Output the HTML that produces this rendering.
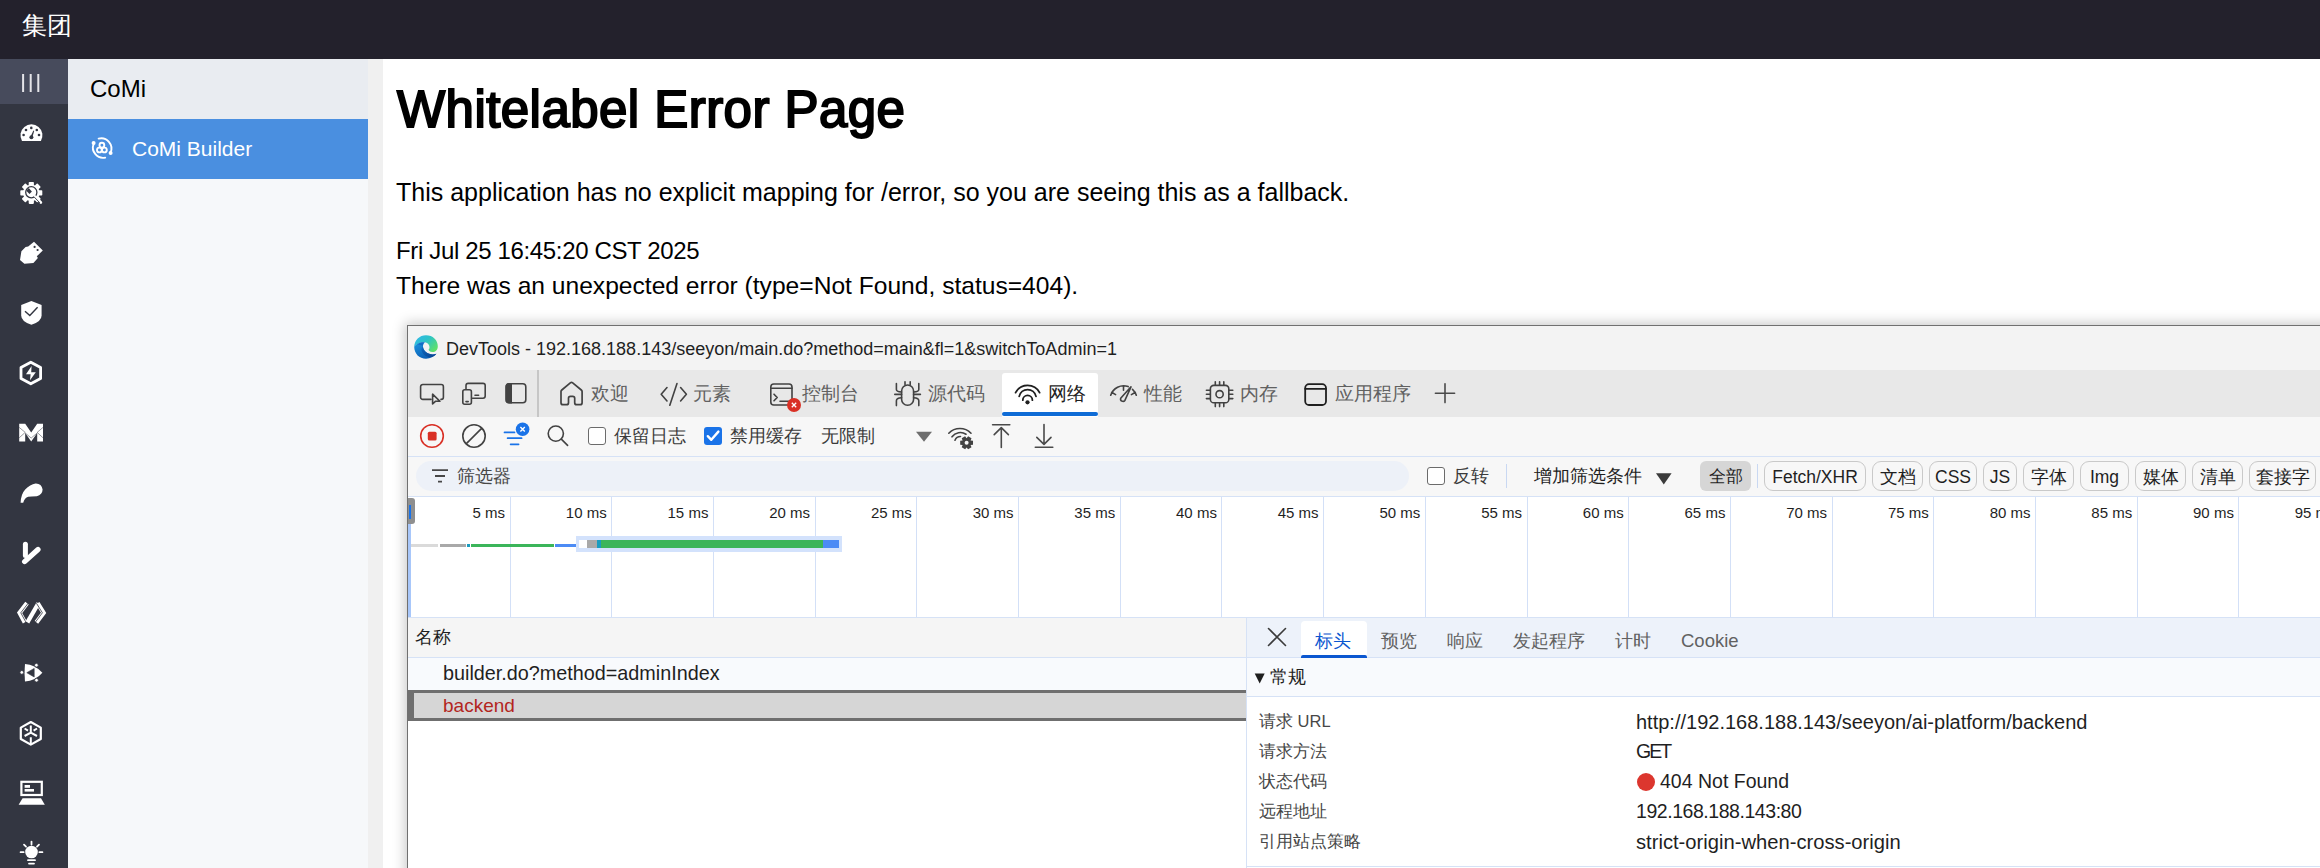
<!DOCTYPE html>
<html><head><meta charset="utf-8">
<style>
*{margin:0;padding:0;box-sizing:border-box}
html,body{width:2320px;height:868px;overflow:hidden;background:#fff;font-family:"Liberation Sans",sans-serif}
div,span,svg{position:absolute}
.nw{white-space:nowrap;line-height:1}
#top{left:0;top:0;width:2320px;height:59px;background:#23212c}
#side{left:0;top:59px;width:68px;height:809px;background:#333641}
#sub{left:68px;top:59px;width:300px;height:809px;background:#f6f8fa}
#gap{left:368px;top:59px;width:15px;height:809px;background:#f0f0f0}
.p{left:396px;font-size:25px;color:#000;white-space:nowrap;line-height:1}
/* devtools */
#dt{left:407px;top:325px;width:1960px;height:580px;border-left:1px solid #707070;border-top:1px solid #707070;background:#f3f3f3;box-shadow:-2px -2px 12px rgba(0,0,0,.22)}
.tab{font-size:18.5px;color:#616161;white-space:nowrap;line-height:1}
.tb{font-size:18px;color:#3b3b3b;white-space:nowrap;line-height:1}
.chip{top:461px;height:30px;border:1px solid #c9c9c9;border-radius:9px;background:#f7f7f7;font-size:17.5px;color:#1f1f1f;text-align:center;line-height:30px;white-space:nowrap}
.ms{top:504.5px;font-size:15px;color:#1f1f1f;white-space:nowrap;line-height:1;text-align:right;width:80px}
.gl{top:497px;width:1px;height:120px;background:#d3e0f7}
.lbl{left:1259px;font-size:16.5px;color:#474747;white-space:nowrap;line-height:1}
.val{left:1636px;font-size:19.5px;color:#1f1f1f;white-space:nowrap;line-height:1}
</style></head><body>
<div id="top"><span class="nw" style="left:22px;top:13px;color:#fff;font-size:25px">集团</span></div>
<div id="side">
 <div style="left:0;top:0;width:68px;height:45px;background:#474b5c"></div>
</div>
<div id="sub">
 <div style="left:0;top:0;width:300px;height:60px;background:#e9ecf1"><span class="nw" style="left:22px;top:18px;font-size:24px;color:#000">CoMi</span></div>
 <div style="left:0;top:60px;width:300px;height:60px;background:#4a8fe0"><span class="nw" style="left:64px;top:19px;font-size:21px;color:#fff">CoMi Builder</span></div>
</div>
<div id="gap"></div>

<span class="nw" style="left:397px;top:84px;font-size:51px;color:#000;letter-spacing:0.45px;-webkit-text-stroke:2px #000">Whitelabel Error Page</span>
<span class="p" style="top:180px">This application has no explicit mapping for /error, so you are seeing this as a fallback.</span>
<span class="p" style="top:239px;font-size:24px;letter-spacing:-0.35px">Fri Jul 25 16:45:20 CST 2025</span>
<span class="p" style="top:274px;font-size:24.6px">There was an unexpected error (type=Not Found, status=404).</span>

<div id="dt"></div>
<!-- title bar -->
<span class="nw" style="left:446px;top:340px;font-size:18px;color:#1f1f1f">DevTools - 192.168.188.143/seeyon/main.do?method=main&amp;fl=1&amp;switchToAdmin=1</span>
<!-- tab bar -->
<div style="left:408px;top:370px;width:1912px;height:47px;background:#e8e8e8"></div>
<div style="left:537px;top:370px;width:2px;height:47px;background:#c6c6c6"></div>
<div style="left:1002px;top:373px;width:96px;height:44px;background:#fff;border-radius:3px 3px 0 0"></div>
<div style="left:1002px;top:412px;width:96px;height:4px;background:#0f6cd6;border-radius:2px"></div>
<span class="tab" style="left:591px;top:385px">欢迎</span>
<span class="tab" style="left:693px;top:385px">元素</span>
<span class="tab" style="left:802px;top:385px">控制台</span>
<span class="tab" style="left:928px;top:385px">源代码</span>
<span class="tab" style="left:1048px;top:385px;color:#1f1f1f">网络</span>
<span class="tab" style="left:1144px;top:385px">性能</span>
<span class="tab" style="left:1240px;top:385px">内存</span>
<span class="tab" style="left:1335px;top:385px">应用程序</span>
<!-- toolbar -->
<div style="left:408px;top:417px;width:1912px;height:39px;background:#f7f7f7"></div>
<div style="left:408px;top:456px;width:1912px;height:1px;background:#d6e2f6"></div>
<div style="left:588px;top:427px;width:18px;height:18px;border:1.5px solid #6b6b6b;border-radius:3px;background:#fff"></div>
<span class="tb" style="left:614px;top:427px">保留日志</span>
<div style="left:704px;top:427px;width:18px;height:18px;border-radius:3px;background:#1a73e8"></div>
<span class="tb" style="left:730px;top:427px">禁用缓存</span>
<span class="tb" style="left:821px;top:427px">无限制</span>
<!-- filter row -->
<div style="left:408px;top:457px;width:1912px;height:39px;background:#f7f7f7"></div>
<div style="left:408px;top:496px;width:1912px;height:1px;background:#d6e2f6"></div>
<div style="left:416px;top:461px;width:993px;height:30px;border-radius:15px;background:#edf1f8"></div>
<span class="tb" style="left:457px;top:467px;color:#474747">筛选器</span>
<div style="left:1427px;top:467px;width:18px;height:18px;border:1.5px solid #6b6b6b;border-radius:3px;background:#fff"></div>
<span class="tb" style="left:1453px;top:467px">反转</span>
<div style="left:1506px;top:464px;width:1px;height:24px;background:#c9d8f2"></div>
<span class="tb" style="left:1534px;top:467px;color:#1f1f1f">增加筛选条件</span>
<div style="left:1700px;top:461px;width:51px;height:30px;border-radius:6px;background:#d6d6d6;font-size:17px;color:#1f1f1f;text-align:center;line-height:31px">全部</div>
<div style="left:1757px;top:464px;width:1px;height:24px;background:#c9d8f2"></div>
<div class="chip" style="left:1764px;width:102px">Fetch/XHR</div>
<div class="chip" style="left:1872px;width:51px">文档</div>
<div class="chip" style="left:1929px;width:48px">CSS</div>
<div class="chip" style="left:1983px;width:34px">JS</div>
<div class="chip" style="left:2023px;width:51px">字体</div>
<div class="chip" style="left:2080px;width:49px">Img</div>
<div class="chip" style="left:2135px;width:51px">媒体</div>
<div class="chip" style="left:2192px;width:51px">清单</div>
<div class="chip" style="left:2249px;width:67px">套接字</div>
<!-- timeline -->
<div style="left:408px;top:497px;width:1912px;height:120px;background:#fff"></div>
<div style="left:408px;top:617px;width:1912px;height:1px;background:#d6e2f6"></div>
<div class="gl" style="left:509.5px"></div>
<span class="ms" style="left:425.0px">5 ms</span>
<div class="gl" style="left:611.2px"></div>
<span class="ms" style="left:526.7px">10 ms</span>
<div class="gl" style="left:712.9px"></div>
<span class="ms" style="left:628.4px">15 ms</span>
<div class="gl" style="left:814.6px"></div>
<span class="ms" style="left:730.1px">20 ms</span>
<div class="gl" style="left:916.3px"></div>
<span class="ms" style="left:831.8px">25 ms</span>
<div class="gl" style="left:1018.0px"></div>
<span class="ms" style="left:933.5px">30 ms</span>
<div class="gl" style="left:1119.7px"></div>
<span class="ms" style="left:1035.2px">35 ms</span>
<div class="gl" style="left:1221.4px"></div>
<span class="ms" style="left:1136.9px">40 ms</span>
<div class="gl" style="left:1323.1px"></div>
<span class="ms" style="left:1238.6px">45 ms</span>
<div class="gl" style="left:1424.8px"></div>
<span class="ms" style="left:1340.3px">50 ms</span>
<div class="gl" style="left:1526.5px"></div>
<span class="ms" style="left:1442.0px">55 ms</span>
<div class="gl" style="left:1628.2px"></div>
<span class="ms" style="left:1543.7px">60 ms</span>
<div class="gl" style="left:1729.9px"></div>
<span class="ms" style="left:1645.4px">65 ms</span>
<div class="gl" style="left:1831.6px"></div>
<span class="ms" style="left:1747.1px">70 ms</span>
<div class="gl" style="left:1933.3px"></div>
<span class="ms" style="left:1848.8px">75 ms</span>
<div class="gl" style="left:2035.0px"></div>
<span class="ms" style="left:1950.5px">80 ms</span>
<div class="gl" style="left:2136.7px"></div>
<span class="ms" style="left:2052.2px">85 ms</span>
<div class="gl" style="left:2238.4px"></div>
<span class="ms" style="left:2153.9px">90 ms</span>
<span class="ms" style="left:2255.6px">95 ms</span>
<div style="left:408px;top:524px;width:3px;height:93px;background:#a8c7fa"></div>
<div style="left:408px;top:498px;width:7px;height:26px;background:#8f8f8f;border-radius:0 3px 3px 0"></div>
<div style="left:409px;top:505px;width:2px;height:14px;background:#1a73e8"></div>
<div style="left:411px;top:544px;width:27px;height:3px;background:#dadada"></div>
<div style="left:440px;top:544px;width:26px;height:3px;background:#a9a9a9"></div>
<div style="left:467px;top:544px;width:3px;height:3px;background:#1a9cc0"></div>
<div style="left:471px;top:544px;width:83px;height:3px;background:#3bb55a"></div>
<div style="left:555px;top:544px;width:21px;height:3px;background:#4c8bf5"></div>
<div style="left:576px;top:536px;width:266px;height:16px;background:#d3e2fc"></div>
<div style="left:579px;top:540px;width:8px;height:8px;background:#fff"></div>
<div style="left:587px;top:540px;width:10px;height:8px;background:#a9a9a9"></div>
<div style="left:597px;top:540px;width:4px;height:8px;background:#1a9cc0"></div>
<div style="left:601px;top:540px;width:222px;height:8px;background:#3bb55a"></div>
<div style="left:823px;top:540px;width:16px;height:8px;background:#4c8bf5"></div>

<!-- bottom -->
<div style="left:408px;top:618px;width:838px;height:39px;background:#f5f5f5"></div>
<div style="left:408px;top:657px;width:838px;height:1px;background:#d6e2f6"></div>
<span class="tb" style="left:415px;top:628px;color:#1f1f1f">名称</span>
<div style="left:408px;top:658px;width:838px;height:32px;background:#f8fafd"></div>
<span class="nw" style="left:443px;top:664px;font-size:19.8px;color:#1f1f1f">builder.do?method=adminIndex</span>
<div style="left:408px;top:690px;width:838px;height:31px;background:#d6d6d6;border:3px solid #6f6f6f;border-left-width:6px;border-right:0"></div>
<span class="nw" style="left:443px;top:696px;font-size:19px;color:#b3261e">backend</span>
<div style="left:408px;top:721px;width:838px;height:147px;background:#fff"></div>
<!-- details -->
<div style="left:1246px;top:618px;width:1074px;height:250px;background:#fff;border-left:1px solid #d6e2f6"></div>
<div style="left:1247px;top:618px;width:1073px;height:40px;background:#edf2fa;border-bottom:1px solid #d6e2f6"></div>
<div style="left:1301px;top:621px;width:66px;height:37px;background:#fff;border-radius:4px 4px 0 0"></div>
<div style="left:1301px;top:655px;width:66px;height:3px;background:#0b57d0;border-radius:2px 2px 0 0"></div>
<span class="tab" style="left:1315px;top:632px;color:#0b57d0;font-size:18px">标头</span>
<span class="tab" style="left:1381px;top:632px;font-size:18px">预览</span>
<span class="tab" style="left:1447px;top:632px;font-size:18px">响应</span>
<span class="tab" style="left:1513px;top:632px;font-size:18px">发起程序</span>
<span class="tab" style="left:1615px;top:632px;font-size:18px">计时</span>
<span class="tab" style="left:1681px;top:632px">Cookie</span>
<div style="left:1247px;top:658px;width:1073px;height:39px;background:#f8fafd;border-bottom:1px solid #d6e2f6"></div>
<span class="tb" style="left:1270px;top:668px;color:#1f1f1f">常规</span>
<span class="lbl" style="top:713px">请求 URL</span>
<span class="lbl" style="top:743px">请求方法</span>
<span class="lbl" style="top:773px">状态代码</span>
<span class="lbl" style="top:803px">远程地址</span>
<span class="lbl" style="top:833px">引用站点策略</span>
<span class="val" style="top:712px;font-size:20px">http://192.168.188.143/seeyon/ai-platform/backend</span>
<span class="val" style="top:742px;letter-spacing:-2px">GET</span>
<div style="left:1637px;top:773px;width:18px;height:18px;border-radius:50%;background:#dc362e"></div>
<span class="val" style="left:1660px;top:772px">404 Not Found</span>
<span class="val" style="top:802px;letter-spacing:-0.45px">192.168.188.143:80</span>
<span class="val" style="top:832px;font-size:20.2px">strict-origin-when-cross-origin</span>
<div style="left:1247px;top:866px;width:1073px;height:1px;background:#d6e2f6"></div>
<svg style="left:0;top:0" width="2320" height="868" viewBox="0 0 2320 868">
<g fill="none" stroke="#424242" stroke-width="1.6" stroke-linecap="round" stroke-linejoin="round">
<!-- inspect -->
<path d="M431 399.4H422.8a2.2 2.2 0 0 1-2.2-2.2V386.7a2.2 2.2 0 0 1 2.2-2.2H441.2a2.2 2.2 0 0 1 2.2 2.2V397.2a2.2 2.2 0 0 1-2.2 2.2H441"/>
<path d="M432.6 394.2V404L435.4 401.3H440Z"/>
<!-- device -->
<path d="M466 389V385.6a2.2 2.2 0 0 1 2.2-2.2H483a2.2 2.2 0 0 1 2.2 2.2V396a2.2 2.2 0 0 1-2.2 2.2H472.5"/>
<rect x="462.8" y="389.8" width="8.6" height="14.4" rx="2"/>
<path d="M466 401.6H468.2M475 395.3H478.6"/>
<!-- dock -->
<rect x="506.2" y="383.8" width="19.6" height="19" rx="3"/>
<!-- home -->
<path d="M561 391.6Q561 390.7 561.8 390L570.3 382.9Q571.5 382 572.7 382.9L581.3 390Q582.1 390.7 582.1 391.6V402.7Q582.1 404.7 580.1 404.7H576.7Q574.7 404.7 574.7 402.7V398.3Q574.7 396.3 572.7 396.3H570.5Q568.5 396.3 568.5 398.3V402.7Q568.5 404.7 566.5 404.7H563Q561 404.7 561 402.7Z" stroke-width="1.7"/>
<!-- elements -->
<path d="M667 387.5L661.2 394.3L667 401M677 383.5L669.8 405.3M680.6 387.5L686.4 394.3L680.6 401"/>
<!-- console -->
<rect x="770.8" y="384" width="21.2" height="21" rx="3"/>
<path d="M770.8 388.3H792M774 394.2L777.2 397.5L774 400.8M780 401.3H789"/>
<!-- bug -->
<rect x="901.6" y="385" width="12" height="20.2" rx="6"/>
<path d="M905 381.8V384.5M910.2 381.8V384.5M896.4 383.5V389.5Q896.4 391.8 901.6 392M918.8 383.5V389.5Q918.8 391.8 913.6 392M894.8 394.4H901.6M913.6 394.4H920.4M901.6 397.8Q896.4 398 896.4 400.8V405.6M913.6 397.8Q918.8 398 918.8 400.8V405.6"/>
<!-- perf -->
<path d="M1110.7 395.3A13.4 13.4 0 0 1 1128.2 386.6M1132.5 389.3A13.4 13.4 0 0 1 1136.3 395.3M1111.6 392.3L1115.6 394.6M1123.5 386V390.2M1135.4 392.3L1131.4 394.6"/>
<path d="M1131 386.8L1124.9 400.4A2.4 2.4 0 0 1 1120.7 398.2Z"/>
<!-- memory -->
<rect x="1210.4" y="385.4" width="18.4" height="17.4" rx="3.4"/>
<circle cx="1219.6" cy="394.2" r="3.6"/>
<path d="M1215.3 381.8V385M1219.6 381.8V385M1223.8 381.8V385M1215.3 403V406.6M1219.6 403V406.6M1223.8 403V406.6M1206.4 390.2H1210M1206.4 394.3H1210M1206.4 398.6H1210M1229.2 390.2H1232.8M1229.2 394.3H1232.8M1229.2 398.6H1232.8"/>
<!-- app -->
<rect x="1305.2" y="384.2" width="20.8" height="20.8" rx="3.8" stroke="#1f1f1f" stroke-width="1.8"/>
<path d="M1305.2 388.8H1326" stroke="#1f1f1f" stroke-width="1.8"/>
<!-- plus -->
<path d="M1445 383.8V402.6M1435.4 393.2H1454.6" stroke="#4a4a4a"/>
<!-- clear -->
<circle cx="474" cy="436" r="11.2"/>
<path d="M466.6 443.4L481.4 428.6"/>
<!-- search -->
<circle cx="555.8" cy="433.6" r="7.6"/>
<path d="M561.3 439.1L567.6 445.4"/>
<!-- wifi gear -->
<path d="M948.8 433.2A15.5 15.5 0 0 1 971 433.2M952 436.8A10.5 10.5 0 0 1 966 434.2M955 440.2A6 6 0 0 1 960.5 436.5"/>
<!-- upload/download -->
<path d="M992.6 424.8H1009.8M1001.3 428V447.4M994.2 434.6L1001.3 427.6L1008.4 434.6" stroke="#4a4a4a"/>
<path d="M1044 424.6V444.2M1036.8 437.4L1044 444.4L1051 437.4M1035.3 447.2H1052.8" stroke="#4a4a4a"/>
<!-- filter in input -->
<path d="M432 470.2H448M435 476H445M438 481.6H442" stroke="#474747" stroke-width="1.8" stroke-linecap="butt"/>
<!-- close X details -->
<path d="M1268.5 628.5L1285.5 645.5M1285.5 628.5L1268.5 645.5" stroke="#3b3b3b" stroke-width="1.6"/>
</g>
<!-- dock filled part -->
<path d="M509.2 383H512V403.6H509.2A3.8 3.8 0 0 1 505.4 399.8V386.8A3.8 3.8 0 0 1 509.2 383Z" fill="#424242"/>
<!-- console badge -->
<circle cx="794" cy="405" r="7" fill="#d93025"/>
<path d="M791.8 402.8L796.2 407.2M796.2 402.8L791.8 407.2" stroke="#fff" stroke-width="1.3"/>
<!-- wifi selected -->
<g fill="none" stroke="#1f1f1f" stroke-width="1.8" stroke-linecap="round">
<path d="M1015.6 392.6A13.6 13.6 0 0 1 1039.6 392.6M1019.2 396.4A8.6 8.6 0 0 1 1036 396.4M1022.8 400.2A4.6 4.6 0 0 1 1032.4 400.2"/>
</g>
<circle cx="1027.5" cy="402.3" r="2.1" fill="#1f1f1f"/>
<!-- record -->
<circle cx="432" cy="436" r="11.3" fill="none" stroke="#d93025" stroke-width="1.6"/>
<rect x="427.8" y="431.8" width="8.8" height="8.8" rx="1.5" fill="#d93025"/>
<!-- filter toolbar blue -->
<path d="M504.5 432.4H514.5M507.6 438.2H521.6M510.6 444.3H518.6" stroke="#1a73e8" stroke-width="1.7" stroke-linecap="round"/>
<circle cx="522.6" cy="429.2" r="6.8" fill="#1a73e8"/>
<path d="M520.4 427L524.8 431.4M524.8 427L520.4 431.4" stroke="#fff" stroke-width="1.4"/>
<!-- checkmark -->
<path d="M707.8 436.2L711.3 439.8L718.4 431.6" fill="none" stroke="#fff" stroke-width="2.4" stroke-linecap="round" stroke-linejoin="round"/>
<!-- dropdown triangles -->
<path d="M916 431.8H932L924 441.8Z" fill="#6e6e6e"/>
<path d="M1656 473.2H1671.6L1663.8 484.4Z" fill="#3b3b3b"/>
<path d="M1254.7 673.6H1264.7L1259.7 683.4Z" fill="#1f1f1f"/>
<!-- gear -->
<g transform="translate(966.6 442.8)">
<path d="M3.98 -2.30L6.41 -1.96L6.41 1.96L3.98 2.30L4.90 4.57L1.51 6.53L0.00 4.60L-1.51 6.53L-4.90 4.57L-3.98 2.30L-6.41 1.96L-6.41 -1.96L-3.98 -2.30L-4.90 -4.57L-1.51 -6.53L-0.00 -4.60L1.51 -6.53L4.90 -4.57Z" fill="#424242"/>
<circle r="2" fill="#f7f7f7"/>
</g>
</svg>
<svg style="left:0;top:0" width="400" height="868" viewBox="0 0 400 868">
<g fill="#fff">
<!-- ||| -->
<rect x="22.1" y="74" width="2" height="18" fill="#e4e4e8"/>
<rect x="29.7" y="74" width="2" height="18" fill="#e4e4e8"/>
<rect x="37.3" y="74" width="2" height="18" fill="#e4e4e8"/>
<!-- gauge -->
<path d="M22 141A11 11 0 1 1 40.9 141Z"/>
</g>
<g fill="#333641">
<circle cx="26" cy="130" r="1.3"/><circle cx="31.3" cy="127.9" r="1.3"/><circle cx="36.8" cy="130" r="1.3"/>
<circle cx="23.6" cy="135" r="1.3"/><circle cx="39" cy="135" r="1.3"/>
<circle cx="31.4" cy="137.3" r="2"/>
<path d="M30.6 136.6L33.4 130.6L34.2 131L32.3 137.5Z"/>
</g>
<!-- gear wrench -->
<g transform="translate(31.3 192.9)">
<g fill="#fff">
<circle r="8.2"/>
<rect x="-2.6" y="-11" width="5.2" height="22" rx="0.8"/>
<rect x="-2.6" y="-11" width="5.2" height="22" rx="0.8" transform="rotate(45)"/>
<rect x="-2.6" y="-11" width="5.2" height="22" rx="0.8" transform="rotate(90)"/>
<rect x="-2.6" y="-11" width="5.2" height="22" rx="0.8" transform="rotate(135)"/>
</g>
<circle cx="0" cy="-0.6" r="5.6" fill="none" stroke="#333641" stroke-width="1.3"/>
<path d="M-2.6 -4.8L0.6 -1.4L-1.8 1.2L-5 -2.2" fill="#333641"/>
<path d="M3.6 3.6L9.6 9.6" stroke="#fff" stroke-width="2.6" stroke-linecap="round"/>
<path d="M2.4 3.6L8.6 10" stroke="#333641" stroke-width="0.9"/>
</g>
<!-- plug -->
<path d="M34 241.8L42.8 250.4L36.8 256.3L37.9 258L33.4 263L24.4 263.8L20 260L21.4 251.2L25.6 247L28.2 246.4Z" fill="#fff"/>
<circle cx="34.6" cy="246.9" r="1.1" fill="#333641"/><circle cx="37.6" cy="250" r="1.1" fill="#333641"/>
<!-- shield -->
<path d="M31.4 301L41.6 305V315.5Q41.6 321.5 31.4 324.8Q21.2 321.5 21.2 315.5V305Z" fill="#fff"/>
<path d="M25 311.2L29.8 315.6L37.6 307.3" fill="none" stroke="#333641" stroke-width="1.4"/>
<!-- hex bolt -->
<path d="M30.8 362.2L40.6 367.6V378.4L30.8 383.8L21 378.4V367.6Z" fill="none" stroke="#fff" stroke-width="2.8" stroke-linejoin="round"/>
<path d="M31.6 366L26 374.2H30.6L30 380.2L35.8 372.2H31.2Z" fill="#fff"/>
<!-- M -->
<path d="M19.2 423.8H25.2L31.2 432.4L37.2 423.8H43V441.4H37.2V433L31.2 441.4L25.2 433V441.4H19.2Z" fill="#fff"/>
<path d="M19.2 427.4L25.2 432.4L19.2 437.8M43 427.4L37.2 432.4L43 437.8M25.2 433L31.2 438M37.2 433L31.2 438" fill="none" stroke="#333641" stroke-width="0.5"/>
<!-- feather -->
<path d="M20.6 502.8Q21 494 25.2 489.5Q30 484.5 35.6 483.4Q41.6 483.2 42.6 489.6Q42.4 495 36.8 496.2Q31 496.6 28.2 496.8Q24.6 498 23.2 502.8Z" fill="#fff"/>
<!-- V check -->
<path d="M25.4 544.2V555.6" stroke="#fff" stroke-width="5" stroke-linecap="round"/>
<path d="M24.6 561.6L38 549.5" stroke="#fff" stroke-width="5.2" stroke-linecap="round"/>
<!-- code -->
<g fill="none" stroke-linejoin="miter" stroke-linecap="butt">
<path d="M27 603.2L19.6 612.8L24.8 622.4" stroke="#fff" stroke-width="4.4"/>
<path d="M27 603.2L19.6 612.8L24.8 622.4" stroke="#333641" stroke-width="0.8" transform="translate(1.2 0)"/>
<path d="M38.4 603.2L27.4 622.4" stroke="#fff" stroke-width="4.2"/>
<path d="M37.6 603.2L43.6 612.8L36.4 622.4" stroke="#fff" stroke-width="4.4"/>
<path d="M37.6 603.2L43.6 612.8L36.4 622.4" stroke="#333641" stroke-width="0.8" transform="translate(-1.2 0)"/>
</g>
<!-- triangle -->
<path d="M25 664Q35 664.4 42.4 672.8Q35 681.2 25 681.6Q24 672.8 25 664Z" fill="#fff"/>
<path d="M26.8 672.7L34.2 668.4V677Z" fill="#333641" stroke="#333641" stroke-width="0.6" stroke-linejoin="round"/>
<g fill="#fff" stroke="#333641" stroke-width="0.9"><circle cx="21.8" cy="672.4" r="1.9"/><circle cx="36.4" cy="665.2" r="1.9"/><circle cx="36.5" cy="680.2" r="1.9"/></g>
<!-- hex asterisk -->
<path d="M30.8 722L40.8 727.6V739L30.8 744.6L20.8 739V727.6Z" fill="none" stroke="#fff" stroke-width="2.2" stroke-linejoin="round"/>
<path d="M30.8 725.6V732.6L24.6 736M30.8 732.6L37 736M30.8 737.2V744M24.6 728.5L28 730.6M37 728.5L33.6 730.6" fill="none" stroke="#fff" stroke-width="2"/>
<!-- laptop -->
<rect x="21.4" y="781.8" width="20.4" height="13.2" fill="none" stroke="#fff" stroke-width="2.2"/>
<rect x="24.6" y="785" width="5.4" height="2.8" fill="#fff"/>
<rect x="24.6" y="789" width="9.4" height="2.6" fill="#fff"/>
<path d="M22.6 798.2H41L44.8 804.8H18.6Z" fill="#fff"/>
<!-- bulb -->
<circle cx="31.5" cy="852" r="6.3" fill="#fff"/>
<path d="M31.5 841.6V844.6M24 844.6L26 846.6M39 844.6L37 846.6M20.6 852.2H23.6M39.4 852.2H42.4M28 860.2H35M29 863.6H34" stroke="#fff" stroke-width="1.8" stroke-linecap="round"/>
<!-- CoMi builder icon -->
<g fill="none" stroke="#fff" stroke-width="1.9" stroke-linecap="round">
<path d="M93.6 144A10.2 10.2 0 0 0 105.2 157.6"/>
<path d="M98.6 138.6A10.2 10.2 0 0 1 110.6 152.4"/>
<circle cx="101.9" cy="145.2" r="2.4"/>
<circle cx="99.4" cy="150" r="2.4"/>
<circle cx="104.4" cy="150" r="2.4"/>
</g>
<circle cx="93.6" cy="143" r="2" fill="#fff"/>
<circle cx="110.6" cy="153" r="2" fill="#fff"/>
</svg>
<svg style="left:413px;top:334px" width="26" height="26" viewBox="0 0 26 26">
<defs>
<linearGradient id="eg1" x1="0" y1="0" x2="1" y2="0.7"><stop offset="0" stop-color="#33b6ee"/><stop offset="0.5" stop-color="#2cc3c8"/><stop offset="1" stop-color="#5fe06a"/></linearGradient>
<linearGradient id="eg2" x1="0" y1="0" x2="0.5" y2="1"><stop offset="0" stop-color="#1c95e0"/><stop offset="1" stop-color="#0b5fb5"/></linearGradient>
<linearGradient id="eg3" x1="0" y1="0" x2="1" y2="1"><stop offset="0" stop-color="#0f6cc4"/><stop offset="1" stop-color="#0a3f8a"/></linearGradient>
</defs>
<path d="M1.2 12.8C1.4 6 6.5 1.2 13 1.2C19.8 1.2 24.8 6 24.8 12.2C24.8 15.8 22.6 18 19.4 18C16.8 18 15.4 16.6 15.6 15.6C16.8 14.6 16.8 12.6 15.8 10.8C14.2 8.4 11.4 7.6 8.2 8.4C5 9.4 2.6 11 1.2 12.8Z" fill="url(#eg1)"/>
<path d="M1.2 12.8C1.2 19.8 6.4 24.8 13 24.8C17.4 24.8 21 22.6 23.4 19.8C21 20.6 18.6 20.6 16.2 19.8C12.2 18.4 9.8 15 10 11.8C10.2 10 11 8.8 12.4 8.2C8 7.8 3 9.6 1.2 12.8Z" fill="url(#eg2)"/>
<path d="M8.4 16C9.5 20.5 13 23 17 23.2C19.6 23.2 21.8 21.8 23.4 19.8C21 20.6 18.6 20.6 16.2 19.8C12.5 18.5 10.4 16.4 9.8 12.5C9 13.5 8.4 14.8 8.4 16Z" fill="url(#eg3)"/>
<path d="M4 10.2C6 8.6 8.5 8 11.4 8.2C10.6 9 10 10.2 10 11.8C7.6 11 5.6 10.6 4 10.2Z" fill="#1166c2" opacity="0.8"/>
</svg>
</body></html>
